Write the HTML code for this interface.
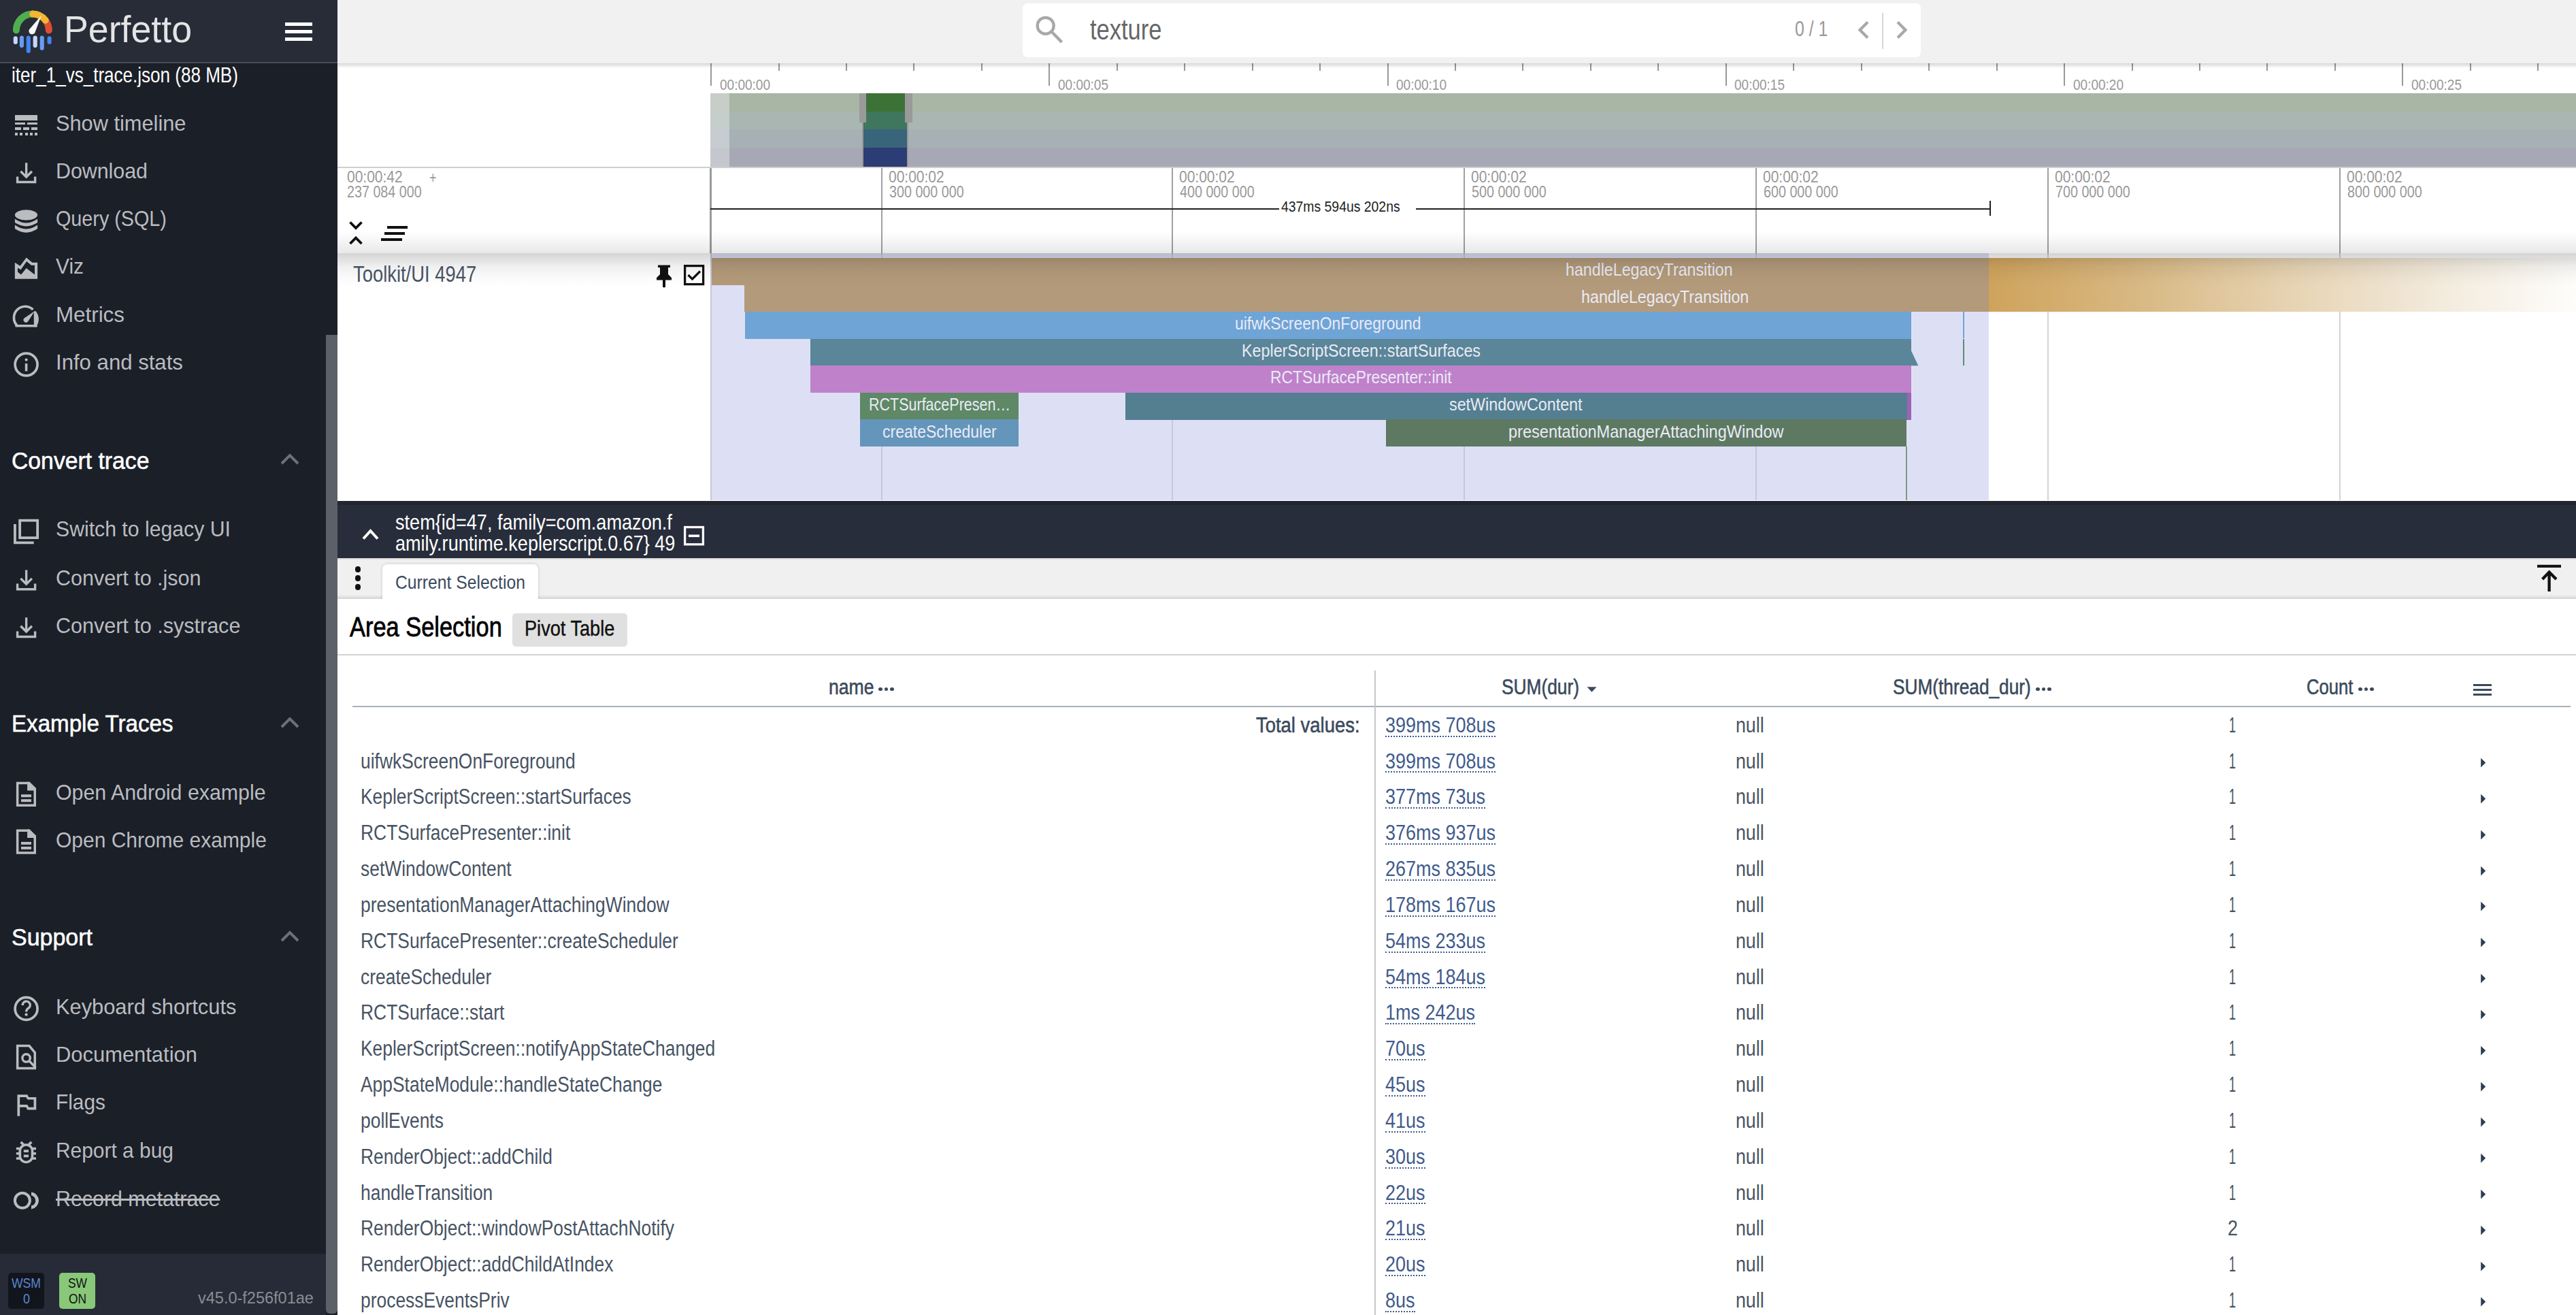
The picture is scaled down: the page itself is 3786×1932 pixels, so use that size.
<!DOCTYPE html><html><head><meta charset="utf-8"><style>
html,body{margin:0;padding:0;width:3786px;height:1932px;overflow:hidden;background:#fff;}
body{position:relative;font-family:"Liberation Sans",sans-serif;}
.t{position:absolute;white-space:pre;line-height:1;transform-origin:0 0;display:block;}
.r{position:absolute;}
</style></head><body>
<div class="r" style="left:496.0px;top:93.0px;width:3290.0px;height:152.0px;background:#ffffff;"></div>
<div class="r" style="left:1044.0px;top:137.0px;width:2742.0px;height:26.5px;background:#a9b5a5;"></div>
<div class="r" style="left:1044.0px;top:137.0px;width:28.0px;height:26.5px;background:#c7cec7;"></div>
<div class="r" style="left:1268.5px;top:137.0px;width:64.5px;height:26.5px;background:#3d7236;"></div>
<div class="r" style="left:1044.0px;top:163.5px;width:2742.0px;height:26.5px;background:#a9b6b2;"></div>
<div class="r" style="left:1044.0px;top:163.5px;width:28.0px;height:26.5px;background:#c6cecc;"></div>
<div class="r" style="left:1268.5px;top:163.5px;width:64.5px;height:26.5px;background:#3f765e;"></div>
<div class="r" style="left:1044.0px;top:190.0px;width:2742.0px;height:26.5px;background:#a7b1b5;"></div>
<div class="r" style="left:1044.0px;top:190.0px;width:28.0px;height:26.5px;background:#c6ccd0;"></div>
<div class="r" style="left:1268.5px;top:190.0px;width:64.5px;height:26.5px;background:#39647a;"></div>
<div class="r" style="left:1044.0px;top:216.5px;width:2742.0px;height:28.5px;background:#a6a8b6;"></div>
<div class="r" style="left:1044.0px;top:216.5px;width:28.0px;height:28.5px;background:#c5c7ce;"></div>
<div class="r" style="left:1268.5px;top:216.5px;width:64.5px;height:28.5px;background:#2c3c75;"></div>
<div class="r" style="left:1262.5px;top:137.0px;width:10.3px;height:43.0px;background:#9a9a9a;"></div>
<div class="r" style="left:1330.0px;top:137.0px;width:11.3px;height:43.0px;background:#9a9a9a;"></div>
<div class="r" style="left:1266.5px;top:180.0px;width:2.0px;height:65.0px;background:#9a9a9a;"></div>
<div class="r" style="left:1333.0px;top:180.0px;width:2.0px;height:65.0px;background:#9a9a9a;"></div>
<div class="r" style="left:496.0px;top:245.0px;width:3290.0px;height:2.0px;background:#cfcfcf;"></div>
<div class="r" style="left:1044.0px;top:93.0px;width:2.0px;height:33.0px;background:#999999;"></div>
<span class="t" style="left:1057.5px;top:113.5px;font-size:22.43px;color:#999999;transform:scaleX(0.8476);">00:00:00</span>
<div class="r" style="left:1143.5px;top:93.0px;width:2.0px;height:11.0px;background:#999999;"></div>
<div class="r" style="left:1242.9px;top:93.0px;width:2.0px;height:11.0px;background:#999999;"></div>
<div class="r" style="left:1342.3px;top:93.0px;width:2.0px;height:11.0px;background:#999999;"></div>
<div class="r" style="left:1441.8px;top:93.0px;width:2.0px;height:11.0px;background:#999999;"></div>
<div class="r" style="left:1541.2px;top:93.0px;width:2.0px;height:33.0px;background:#999999;"></div>
<span class="t" style="left:1554.8px;top:113.5px;font-size:22.43px;color:#999999;transform:scaleX(0.8476);">00:00:05</span>
<div class="r" style="left:1640.7px;top:93.0px;width:2.0px;height:11.0px;background:#999999;"></div>
<div class="r" style="left:1740.2px;top:93.0px;width:2.0px;height:11.0px;background:#999999;"></div>
<div class="r" style="left:1839.6px;top:93.0px;width:2.0px;height:11.0px;background:#999999;"></div>
<div class="r" style="left:1939.1px;top:93.0px;width:2.0px;height:11.0px;background:#999999;"></div>
<div class="r" style="left:2038.5px;top:93.0px;width:2.0px;height:33.0px;background:#999999;"></div>
<span class="t" style="left:2052.0px;top:113.5px;font-size:22.43px;color:#999999;transform:scaleX(0.8476);">00:00:10</span>
<div class="r" style="left:2137.9px;top:93.0px;width:2.0px;height:11.0px;background:#999999;"></div>
<div class="r" style="left:2237.4px;top:93.0px;width:2.0px;height:11.0px;background:#999999;"></div>
<div class="r" style="left:2336.9px;top:93.0px;width:2.0px;height:11.0px;background:#999999;"></div>
<div class="r" style="left:2436.3px;top:93.0px;width:2.0px;height:11.0px;background:#999999;"></div>
<div class="r" style="left:2535.8px;top:93.0px;width:2.0px;height:33.0px;background:#999999;"></div>
<span class="t" style="left:2549.2px;top:113.5px;font-size:22.43px;color:#999999;transform:scaleX(0.8476);">00:00:15</span>
<div class="r" style="left:2635.2px;top:93.0px;width:2.0px;height:11.0px;background:#999999;"></div>
<div class="r" style="left:2734.7px;top:93.0px;width:2.0px;height:11.0px;background:#999999;"></div>
<div class="r" style="left:2834.1px;top:93.0px;width:2.0px;height:11.0px;background:#999999;"></div>
<div class="r" style="left:2933.6px;top:93.0px;width:2.0px;height:11.0px;background:#999999;"></div>
<div class="r" style="left:3033.0px;top:93.0px;width:2.0px;height:33.0px;background:#999999;"></div>
<span class="t" style="left:3046.5px;top:113.5px;font-size:22.43px;color:#999999;transform:scaleX(0.8476);">00:00:20</span>
<div class="r" style="left:3132.5px;top:93.0px;width:2.0px;height:11.0px;background:#999999;"></div>
<div class="r" style="left:3231.9px;top:93.0px;width:2.0px;height:11.0px;background:#999999;"></div>
<div class="r" style="left:3331.3px;top:93.0px;width:2.0px;height:11.0px;background:#999999;"></div>
<div class="r" style="left:3430.8px;top:93.0px;width:2.0px;height:11.0px;background:#999999;"></div>
<div class="r" style="left:3530.2px;top:93.0px;width:2.0px;height:33.0px;background:#999999;"></div>
<span class="t" style="left:3543.8px;top:113.5px;font-size:22.43px;color:#999999;transform:scaleX(0.8476);">00:00:25</span>
<div class="r" style="left:3629.7px;top:93.0px;width:2.0px;height:11.0px;background:#999999;"></div>
<div class="r" style="left:3729.2px;top:93.0px;width:2.0px;height:11.0px;background:#999999;"></div>
<div class="r" style="left:496.0px;top:93.0px;width:3290.0px;height:7.0px;background:transparent;background:linear-gradient(rgba(0,0,0,0.16),rgba(0,0,0,0));"></div>
<div class="r" style="left:496.0px;top:247.0px;width:3290.0px;height:125.0px;background:#ffffff;"></div>
<span class="t" style="left:510.0px;top:247.6px;font-size:24.43px;color:#999999;transform:scaleX(0.8592);">00:00:42</span>
<span class="t" style="left:510.0px;top:269.8px;font-size:24.43px;color:#999999;transform:scaleX(0.8075);">237 084 000</span>
<span class="t" style="left:631.0px;top:249.0px;font-size:24.29px;color:#999999;transform:scaleX(0.7404);">+</span>
<svg class="r" style="left:505px;top:318px;" width="40" height="48" viewBox="0 0 40 48"><path d="M9.5 8.5 L18 17 L26.5 8.5 M9.5 40 L18 31.5 L26.5 40" stroke="#111" stroke-width="3.8" fill="none"/></svg>
<div class="r" style="left:569.0px;top:332.0px;width:30.4px;height:4.0px;background:#111;"></div>
<div class="r" style="left:564.5px;top:340.5px;width:30.5px;height:4.0px;background:#111;"></div>
<div class="r" style="left:560.0px;top:349.5px;width:31.0px;height:4.0px;background:#111;"></div>
<div class="r" style="left:1294.8px;top:247.0px;width:2.2px;height:125.0px;background:#a0a0a0;"></div>
<span class="t" style="left:1305.9px;top:247.6px;font-size:24.43px;color:#999999;transform:scaleX(0.8592);">00:00:02</span>
<span class="t" style="left:1306.9px;top:269.8px;font-size:24.43px;color:#999999;transform:scaleX(0.8075);">300 000 000</span>
<div class="r" style="left:1721.7px;top:247.0px;width:2.2px;height:125.0px;background:#a0a0a0;"></div>
<span class="t" style="left:1732.8px;top:247.6px;font-size:24.43px;color:#999999;transform:scaleX(0.8592);">00:00:02</span>
<span class="t" style="left:1733.8px;top:269.8px;font-size:24.43px;color:#999999;transform:scaleX(0.8075);">400 000 000</span>
<div class="r" style="left:2150.9px;top:247.0px;width:2.2px;height:125.0px;background:#a0a0a0;"></div>
<span class="t" style="left:2162.0px;top:247.6px;font-size:24.43px;color:#999999;transform:scaleX(0.8592);">00:00:02</span>
<span class="t" style="left:2163.0px;top:269.8px;font-size:24.43px;color:#999999;transform:scaleX(0.8075);">500 000 000</span>
<div class="r" style="left:2580.0px;top:247.0px;width:2.2px;height:125.0px;background:#a0a0a0;"></div>
<span class="t" style="left:2591.1px;top:247.6px;font-size:24.43px;color:#999999;transform:scaleX(0.8592);">00:00:02</span>
<span class="t" style="left:2592.1px;top:269.8px;font-size:24.43px;color:#999999;transform:scaleX(0.8075);">600 000 000</span>
<div class="r" style="left:3009.2px;top:247.0px;width:2.2px;height:125.0px;background:#a0a0a0;"></div>
<span class="t" style="left:3020.3px;top:247.6px;font-size:24.43px;color:#999999;transform:scaleX(0.8592);">00:00:02</span>
<span class="t" style="left:3021.3px;top:269.8px;font-size:24.43px;color:#999999;transform:scaleX(0.8075);">700 000 000</span>
<div class="r" style="left:3438.2px;top:247.0px;width:2.2px;height:125.0px;background:#a0a0a0;"></div>
<span class="t" style="left:3449.3px;top:247.6px;font-size:24.43px;color:#999999;transform:scaleX(0.8592);">00:00:02</span>
<span class="t" style="left:3450.3px;top:269.8px;font-size:24.43px;color:#999999;transform:scaleX(0.8075);">800 000 000</span>
<div class="r" style="left:1042.5px;top:247.0px;width:3.0px;height:125.0px;background:#9a9a9a;"></div>
<div class="r" style="left:1044.0px;top:306.2px;width:835.6px;height:2.2px;background:#222222;"></div>
<div class="r" style="left:2080.5px;top:306.2px;width:843.5px;height:2.2px;background:#222222;"></div>
<div class="r" style="left:2923.6px;top:294.5px;width:2.0px;height:22.5px;background:#222222;"></div>
<span class="t" style="left:1883.0px;top:292.7px;font-size:22.43px;color:#222222;transform:scaleX(0.8648);">437ms 594us 202ns</span>
<div class="r" style="left:496.0px;top:340.0px;width:3290.0px;height:32.0px;background:transparent;background:linear-gradient(rgba(0,0,0,0),rgba(0,0,0,0.09));"></div>
<div class="r" style="left:496.0px;top:372.0px;width:548.0px;height:363.0px;background:#ffffff;"></div>
<div class="r" style="left:1044.0px;top:372.0px;width:1879.0px;height:363.0px;background:#dde0f5;"></div>
<div class="r" style="left:2923.0px;top:372.0px;width:863.0px;height:363.0px;background:#ffffff;"></div>
<div class="r" style="left:1294.9px;top:372.0px;width:2.0px;height:363.0px;background:#c4c8dc;"></div>
<div class="r" style="left:1721.8px;top:372.0px;width:2.0px;height:363.0px;background:#c4c8dc;"></div>
<div class="r" style="left:2151.0px;top:372.0px;width:2.0px;height:363.0px;background:#c4c8dc;"></div>
<div class="r" style="left:2580.1px;top:372.0px;width:2.0px;height:363.0px;background:#c4c8dc;"></div>
<div class="r" style="left:3009.3px;top:372.0px;width:2.0px;height:363.0px;background:#d4d4d4;"></div>
<div class="r" style="left:3438.3px;top:372.0px;width:2.0px;height:363.0px;background:#d4d4d4;"></div>
<div class="r" style="left:1043.5px;top:372.0px;width:2.5px;height:363.0px;background:#c3c8da;"></div>
<div class="r" style="left:2923.0px;top:378.7px;width:863.0px;height:79.2px;background:transparent;background:linear-gradient(90deg,#cfa35c 0%,#d8b882 25%,#e6d2b0 50%,#f2e9da 75%,#fefdfb 100%);"></div>
<div class="r" style="left:1046.0px;top:378.7px;width:1877.0px;height:40.2px;background:#b39a7a;"></div>
<div class="r" style="left:1093.8px;top:418.3px;width:1829.2px;height:40.2px;background:#b39a7a;"></div>
<div class="r" style="left:1094.5px;top:457.9px;width:1714.3px;height:40.2px;background:#6fa4d6;"></div>
<div class="r" style="left:1191.0px;top:497.5px;width:1618.0px;height:40.2px;background:#5b8598;"></div>
<div class="r" style="left:1191.0px;top:537.1px;width:1618.0px;height:40.2px;background:#c081cb;"></div>
<div class="r" style="left:1264.2px;top:576.7px;width:232.9px;height:40.2px;background:#5f8866;"></div>
<div class="r" style="left:1264.2px;top:616.3px;width:232.9px;height:40.2px;background:#6495bb;"></div>
<div class="r" style="left:1653.5px;top:576.7px;width:1149.5px;height:40.2px;background:#547f91;"></div>
<div class="r" style="left:2803.0px;top:576.7px;width:6.0px;height:40.2px;background:#9d63b5;"></div>
<div class="r" style="left:2036.7px;top:616.3px;width:765.1px;height:40.2px;background:#5e7962;"></div>
<svg class="r" style="left:2800px;top:495px" width="30" height="45"><path d="M8.8 20 L19.3 42.2 L8.8 42.2 Z" fill="#5b8598"/></svg>
<div class="r" style="left:2885.0px;top:457.9px;width:2.0px;height:39.6px;background:#6fa4d6;"></div>
<div class="r" style="left:2885.0px;top:497.5px;width:2.0px;height:39.6px;background:#5f8a78;"></div>
<div class="r" style="left:2801.0px;top:655.9px;width:1.5px;height:79.1px;background:#7d9a80;"></div>
<span class="t" style="left:2301.0px;top:384.0px;font-size:25.71px;color:#e9ebf6;transform:scaleX(0.9034);">handleLegacyTransition</span>
<span class="t" style="left:2324.3px;top:423.6px;font-size:25.71px;color:#e9ebf6;transform:scaleX(0.9056);">handleLegacyTransition</span>
<span class="t" style="left:1814.8px;top:463.2px;font-size:25.71px;color:#e9ebf6;transform:scaleX(0.8906);">uifwkScreenOnForeground</span>
<span class="t" style="left:1824.7px;top:502.8px;font-size:25.71px;color:#e9ebf6;transform:scaleX(0.9067);">KeplerScriptScreen::startSurfaces</span>
<span class="t" style="left:1867.2px;top:542.4px;font-size:25.71px;color:#e9ebf6;transform:scaleX(0.8887);">RCTSurfacePresenter::init</span>
<span class="t" style="left:2130.4px;top:582.0px;font-size:25.71px;color:#e9ebf6;transform:scaleX(0.9063);">setWindowContent</span>
<span class="t" style="left:2216.6px;top:621.6px;font-size:25.71px;color:#e9ebf6;transform:scaleX(0.9162);">presentationManagerAttachingWindow</span>
<span class="t" style="left:1276.5px;top:582.0px;font-size:25.71px;color:#e9ebf6;transform:scaleX(0.8365);">RCTSurfacePresen…</span>
<span class="t" style="left:1297.0px;top:621.6px;font-size:25.71px;color:#e9ebf6;transform:scaleX(0.8955);">createScheduler</span>
<div class="r" style="left:496.0px;top:372.0px;width:3290.0px;height:50.0px;background:transparent;background:linear-gradient(rgba(0,0,0,0.17),rgba(0,0,0,0.06) 40%,rgba(0,0,0,0.015) 75%,rgba(0,0,0,0));"></div>
<span class="t" style="left:518.6px;top:385.8px;font-size:33.43px;color:#475363;transform:scaleX(0.8194);">Toolkit/UI 4947</span>
<svg class="r" style="left:960px;top:386px;" width="32" height="40" viewBox="0 0 32 40"><path d="M7 3.5 H25 V7 H22 V17 L27 22 V25.5 H18 V35.5 Q16 37.5 14 35.5 V25.5 H5 V22 L10 17 V7 H7 Z" fill="#111"/></svg>
<svg class="r" style="left:1000px;top:384px;" width="42" height="40" viewBox="0 0 42 40"><rect x="6.6" y="6.6" width="27" height="27" stroke="#111" stroke-width="3.3" fill="none"/><path d="M11.5 20 L17.5 26 L29 14.5" stroke="#111" stroke-width="3.3" fill="none"/></svg>
<div class="r" style="left:496.0px;top:735.5px;width:3290.0px;height:84.0px;background:#272d3a;"></div>
<div class="r" style="left:496.0px;top:735.5px;width:3290.0px;height:6.5px;background:#21262f;"></div>
<svg class="r" style="left:526px;top:770px;" width="40" height="30" viewBox="0 0 40 30"><path d="M8 21.5 L18.5 10 L29 21.5" stroke="#ffffff" stroke-width="4" fill="none"/></svg>
<span class="t" style="left:580.9px;top:751.9px;font-size:31.43px;color:#ffffff;transform:scaleX(0.8629);">stem{id=47, family=com.amazon.f</span>
<span class="t" style="left:580.9px;top:782.9px;font-size:31.43px;color:#ffffff;transform:scaleX(0.8608);">amily.runtime.keplerscript.0.67} 49</span>
<svg class="r" style="left:1000px;top:768px;" width="40" height="40" viewBox="0 0 40 40"><rect x="6.6" y="6.5" width="26.8" height="25.3" stroke="#ffffff" stroke-width="3.3" fill="none"/><rect x="12" y="17.5" width="16" height="3.6" fill="#ffffff"/></svg>
<div class="r" style="left:496.0px;top:819.5px;width:3290.0px;height:60.5px;background:#f0f0f0;"></div>
<div class="r" style="left:496.0px;top:819.5px;width:3290.0px;height:3.5px;background:transparent;background:linear-gradient(rgba(0,0,0,0.12),rgba(0,0,0,0));"></div>
<div class="r" style="left:496.0px;top:874.0px;width:3290.0px;height:6.0px;background:transparent;background:linear-gradient(rgba(0,0,0,0),rgba(0,0,0,0.12));"></div>
<div class="r" style="left:521.7px;top:832.0px;width:8.6px;height:8.6px;background:#111;border-radius:50%;"></div>
<div class="r" style="left:521.7px;top:845.3px;width:8.6px;height:8.6px;background:#111;border-radius:50%;"></div>
<div class="r" style="left:521.7px;top:858.1px;width:8.6px;height:8.6px;background:#111;border-radius:50%;"></div>
<div class="r" style="left:562.0px;top:829.0px;width:229.4px;height:51.0px;background:#ffffff;border-radius:7px 7px 0 0;box-shadow:0 0 4px rgba(0,0,0,0.18);"></div>
<div class="r" style="left:562.0px;top:874.0px;width:229.4px;height:6.0px;background:#ffffff;"></div>
<span class="t" style="left:581.0px;top:840.6px;font-size:28.29px;color:#3b4a5c;transform:scaleX(0.8740);">Current Selection</span>
<svg class="r" style="left:3724px;top:825px;" width="46" height="50" viewBox="0 0 46 50"><rect x="5" y="4.8" width="35" height="4.1" fill="#111"/><path d="M22.6 44 V16 M12.6 26 L22.6 15.6 L33 26" stroke="#111" stroke-width="4.3" fill="none"/></svg>
<div class="r" style="left:496.0px;top:880.0px;width:3290.0px;height:1052.0px;background:#ffffff;"></div>
<span class="t" style="left:513.9px;top:899.9px;font-size:41.43px;color:#000000;transform:scaleX(0.8306);-webkit-text-stroke:0.8px #000;">Area Selection</span>
<div class="r" style="left:753.2px;top:901.0px;width:168.8px;height:48.5px;background:#e0e0e0;border-radius:5px;"></div>
<span class="t" style="left:771.2px;top:908.4px;font-size:31.43px;color:#111111;transform:scaleX(0.8644);-webkit-text-stroke:0.45px #111;">Pivot Table</span>
<div class="r" style="left:496.0px;top:961.3px;width:3290.0px;height:1.7px;background:#d2d2d2;"></div>
<div class="r" style="left:518.0px;top:1036.8px;width:3260.0px;height:2.0px;background:#a9b1bb;"></div>
<div class="r" style="left:2020.0px;top:985.0px;width:2.0px;height:947.0px;background:#c4c7cc;"></div>
<span class="t" style="left:1218.2px;top:994.3px;font-size:31.43px;color:#3b4a5c;transform:scaleX(0.8471);-webkit-text-stroke:0.6px #3b4a5c;">name</span>
<div class="r" style="left:1291.0px;top:1009.7px;width:5.6px;height:5.6px;background:#3b4a5c;border-radius:50%;"></div>
<div class="r" style="left:1299.6px;top:1009.7px;width:5.6px;height:5.6px;background:#3b4a5c;border-radius:50%;"></div>
<div class="r" style="left:1308.2px;top:1009.7px;width:5.6px;height:5.6px;background:#3b4a5c;border-radius:50%;"></div>
<span class="t" style="left:2207.0px;top:994.3px;font-size:31.43px;color:#3b4a5c;transform:scaleX(0.8370);-webkit-text-stroke:0.6px #3b4a5c;">SUM(dur)</span>
<svg class="r" style="left:2322px;top:1006px;" width="30" height="20" viewBox="0 0 30 20"><path d="M10.5 3.3 H24.5 L17.5 10.7 Z" fill="#3b4a5c"/></svg>
<span class="t" style="left:2781.7px;top:994.3px;font-size:31.43px;color:#3b4a5c;transform:scaleX(0.8353);-webkit-text-stroke:0.6px #3b4a5c;">SUM(thread_dur)</span>
<div class="r" style="left:2992.0px;top:1009.7px;width:5.6px;height:5.6px;background:#3b4a5c;border-radius:50%;"></div>
<div class="r" style="left:3000.6px;top:1009.7px;width:5.6px;height:5.6px;background:#3b4a5c;border-radius:50%;"></div>
<div class="r" style="left:3009.2px;top:1009.7px;width:5.6px;height:5.6px;background:#3b4a5c;border-radius:50%;"></div>
<span class="t" style="left:3390.0px;top:994.3px;font-size:31.43px;color:#3b4a5c;transform:scaleX(0.8168);-webkit-text-stroke:0.6px #3b4a5c;">Count</span>
<div class="r" style="left:3466.0px;top:1009.7px;width:5.6px;height:5.6px;background:#3b4a5c;border-radius:50%;"></div>
<div class="r" style="left:3474.6px;top:1009.7px;width:5.6px;height:5.6px;background:#3b4a5c;border-radius:50%;"></div>
<div class="r" style="left:3483.2px;top:1009.7px;width:5.6px;height:5.6px;background:#3b4a5c;border-radius:50%;"></div>
<div class="r" style="left:3635.0px;top:1004.5px;width:27.0px;height:3.0px;background:#3b4a5c;"></div>
<div class="r" style="left:3635.0px;top:1011.5px;width:27.0px;height:3.0px;background:#3b4a5c;"></div>
<div class="r" style="left:3635.0px;top:1018.5px;width:27.0px;height:3.0px;background:#3b4a5c;"></div>
<span class="t" style="left:1846.0px;top:1049.7px;font-size:31.00px;color:#3b4a5c;transform:scaleX(0.8850);-webkit-text-stroke:0.6px #3b4a5c;">Total values:</span>
<span class="t" style="left:2036.0px;top:1049.7px;font-size:31.00px;color:#3f5b8c;transform:scaleX(0.8700);">399ms 708us</span>
<div class="r" style="left:2036.0px;top:1080.5px;width:161.9px;height:0;border-top:2px dotted #3f5b8c;"></div>
<span class="t" style="left:2551.0px;top:1049.7px;font-size:31.00px;color:#475363;transform:scaleX(0.8620);">null</span>
<span class="t" style="left:3276.0px;top:1049.7px;font-size:31.00px;color:#475363;transform:scaleX(0.5800);">1</span>
<span class="t" style="left:529.8px;top:1102.5px;font-size:31.00px;color:#475363;transform:scaleX(0.8520);">uifwkScreenOnForeground</span>
<span class="t" style="left:2036.0px;top:1102.5px;font-size:31.00px;color:#3f5b8c;transform:scaleX(0.8700);">399ms 708us</span>
<div class="r" style="left:2036.0px;top:1133.3px;width:161.9px;height:0;border-top:2px dotted #3f5b8c;"></div>
<span class="t" style="left:2551.0px;top:1102.5px;font-size:31.00px;color:#475363;transform:scaleX(0.8620);">null</span>
<span class="t" style="left:3276.0px;top:1102.5px;font-size:31.00px;color:#475363;transform:scaleX(0.5800);">1</span>
<svg class="r" style="left:3640px;top:1112.03px;" width="20" height="20" viewBox="0 0 20 20"><path d="M6.2 1.7 L13.2 8.6 L6.2 15.5 Z" fill="#2f3e52"/></svg>
<span class="t" style="left:529.8px;top:1155.4px;font-size:31.00px;color:#475363;transform:scaleX(0.8520);">KeplerScriptScreen::startSurfaces</span>
<span class="t" style="left:2036.0px;top:1155.4px;font-size:31.00px;color:#3f5b8c;transform:scaleX(0.8700);">377ms 73us</span>
<div class="r" style="left:2036.0px;top:1186.2px;width:146.9px;height:0;border-top:2px dotted #3f5b8c;"></div>
<span class="t" style="left:2551.0px;top:1155.4px;font-size:31.00px;color:#475363;transform:scaleX(0.8620);">null</span>
<span class="t" style="left:3276.0px;top:1155.4px;font-size:31.00px;color:#475363;transform:scaleX(0.5800);">1</span>
<svg class="r" style="left:3640px;top:1164.8600000000001px;" width="20" height="20" viewBox="0 0 20 20"><path d="M6.2 1.7 L13.2 8.6 L6.2 15.5 Z" fill="#2f3e52"/></svg>
<span class="t" style="left:529.8px;top:1208.2px;font-size:31.00px;color:#475363;transform:scaleX(0.8520);">RCTSurfacePresenter::init</span>
<span class="t" style="left:2036.0px;top:1208.2px;font-size:31.00px;color:#3f5b8c;transform:scaleX(0.8700);">376ms 937us</span>
<div class="r" style="left:2036.0px;top:1239.0px;width:161.9px;height:0;border-top:2px dotted #3f5b8c;"></div>
<span class="t" style="left:2551.0px;top:1208.2px;font-size:31.00px;color:#475363;transform:scaleX(0.8620);">null</span>
<span class="t" style="left:3276.0px;top:1208.2px;font-size:31.00px;color:#475363;transform:scaleX(0.5800);">1</span>
<svg class="r" style="left:3640px;top:1217.69px;" width="20" height="20" viewBox="0 0 20 20"><path d="M6.2 1.7 L13.2 8.6 L6.2 15.5 Z" fill="#2f3e52"/></svg>
<span class="t" style="left:529.8px;top:1261.0px;font-size:31.00px;color:#475363;transform:scaleX(0.8520);">setWindowContent</span>
<span class="t" style="left:2036.0px;top:1261.0px;font-size:31.00px;color:#3f5b8c;transform:scaleX(0.8700);">267ms 835us</span>
<div class="r" style="left:2036.0px;top:1291.8px;width:161.9px;height:0;border-top:2px dotted #3f5b8c;"></div>
<span class="t" style="left:2551.0px;top:1261.0px;font-size:31.00px;color:#475363;transform:scaleX(0.8620);">null</span>
<span class="t" style="left:3276.0px;top:1261.0px;font-size:31.00px;color:#475363;transform:scaleX(0.5800);">1</span>
<svg class="r" style="left:3640px;top:1270.52px;" width="20" height="20" viewBox="0 0 20 20"><path d="M6.2 1.7 L13.2 8.6 L6.2 15.5 Z" fill="#2f3e52"/></svg>
<span class="t" style="left:529.8px;top:1313.8px;font-size:31.00px;color:#475363;transform:scaleX(0.8520);">presentationManagerAttachingWindow</span>
<span class="t" style="left:2036.0px;top:1313.8px;font-size:31.00px;color:#3f5b8c;transform:scaleX(0.8700);">178ms 167us</span>
<div class="r" style="left:2036.0px;top:1344.6px;width:161.9px;height:0;border-top:2px dotted #3f5b8c;"></div>
<span class="t" style="left:2551.0px;top:1313.8px;font-size:31.00px;color:#475363;transform:scaleX(0.8620);">null</span>
<span class="t" style="left:3276.0px;top:1313.8px;font-size:31.00px;color:#475363;transform:scaleX(0.5800);">1</span>
<svg class="r" style="left:3640px;top:1323.35px;" width="20" height="20" viewBox="0 0 20 20"><path d="M6.2 1.7 L13.2 8.6 L6.2 15.5 Z" fill="#2f3e52"/></svg>
<span class="t" style="left:529.8px;top:1366.7px;font-size:31.00px;color:#475363;transform:scaleX(0.8520);">RCTSurfacePresenter::createScheduler</span>
<span class="t" style="left:2036.0px;top:1366.7px;font-size:31.00px;color:#3f5b8c;transform:scaleX(0.8700);">54ms 233us</span>
<div class="r" style="left:2036.0px;top:1397.5px;width:146.9px;height:0;border-top:2px dotted #3f5b8c;"></div>
<span class="t" style="left:2551.0px;top:1366.7px;font-size:31.00px;color:#475363;transform:scaleX(0.8620);">null</span>
<span class="t" style="left:3276.0px;top:1366.7px;font-size:31.00px;color:#475363;transform:scaleX(0.5800);">1</span>
<svg class="r" style="left:3640px;top:1376.18px;" width="20" height="20" viewBox="0 0 20 20"><path d="M6.2 1.7 L13.2 8.6 L6.2 15.5 Z" fill="#2f3e52"/></svg>
<span class="t" style="left:529.8px;top:1419.5px;font-size:31.00px;color:#475363;transform:scaleX(0.8520);">createScheduler</span>
<span class="t" style="left:2036.0px;top:1419.5px;font-size:31.00px;color:#3f5b8c;transform:scaleX(0.8700);">54ms 184us</span>
<div class="r" style="left:2036.0px;top:1450.3px;width:146.9px;height:0;border-top:2px dotted #3f5b8c;"></div>
<span class="t" style="left:2551.0px;top:1419.5px;font-size:31.00px;color:#475363;transform:scaleX(0.8620);">null</span>
<span class="t" style="left:3276.0px;top:1419.5px;font-size:31.00px;color:#475363;transform:scaleX(0.5800);">1</span>
<svg class="r" style="left:3640px;top:1429.01px;" width="20" height="20" viewBox="0 0 20 20"><path d="M6.2 1.7 L13.2 8.6 L6.2 15.5 Z" fill="#2f3e52"/></svg>
<span class="t" style="left:529.8px;top:1472.3px;font-size:31.00px;color:#475363;transform:scaleX(0.8520);">RCTSurface::start</span>
<span class="t" style="left:2036.0px;top:1472.3px;font-size:31.00px;color:#3f5b8c;transform:scaleX(0.8700);">1ms 242us</span>
<div class="r" style="left:2036.0px;top:1503.1px;width:131.9px;height:0;border-top:2px dotted #3f5b8c;"></div>
<span class="t" style="left:2551.0px;top:1472.3px;font-size:31.00px;color:#475363;transform:scaleX(0.8620);">null</span>
<span class="t" style="left:3276.0px;top:1472.3px;font-size:31.00px;color:#475363;transform:scaleX(0.5800);">1</span>
<svg class="r" style="left:3640px;top:1481.8400000000001px;" width="20" height="20" viewBox="0 0 20 20"><path d="M6.2 1.7 L13.2 8.6 L6.2 15.5 Z" fill="#2f3e52"/></svg>
<span class="t" style="left:529.8px;top:1525.2px;font-size:31.00px;color:#475363;transform:scaleX(0.8520);">KeplerScriptScreen::notifyAppStateChanged</span>
<span class="t" style="left:2036.0px;top:1525.2px;font-size:31.00px;color:#3f5b8c;transform:scaleX(0.8700);">70us</span>
<div class="r" style="left:2036.0px;top:1556.0px;width:58.5px;height:0;border-top:2px dotted #3f5b8c;"></div>
<span class="t" style="left:2551.0px;top:1525.2px;font-size:31.00px;color:#475363;transform:scaleX(0.8620);">null</span>
<span class="t" style="left:3276.0px;top:1525.2px;font-size:31.00px;color:#475363;transform:scaleX(0.5800);">1</span>
<svg class="r" style="left:3640px;top:1534.67px;" width="20" height="20" viewBox="0 0 20 20"><path d="M6.2 1.7 L13.2 8.6 L6.2 15.5 Z" fill="#2f3e52"/></svg>
<span class="t" style="left:529.8px;top:1578.0px;font-size:31.00px;color:#475363;transform:scaleX(0.8520);">AppStateModule::handleStateChange</span>
<span class="t" style="left:2036.0px;top:1578.0px;font-size:31.00px;color:#3f5b8c;transform:scaleX(0.8700);">45us</span>
<div class="r" style="left:2036.0px;top:1608.8px;width:58.5px;height:0;border-top:2px dotted #3f5b8c;"></div>
<span class="t" style="left:2551.0px;top:1578.0px;font-size:31.00px;color:#475363;transform:scaleX(0.8620);">null</span>
<span class="t" style="left:3276.0px;top:1578.0px;font-size:31.00px;color:#475363;transform:scaleX(0.5800);">1</span>
<svg class="r" style="left:3640px;top:1587.5px;" width="20" height="20" viewBox="0 0 20 20"><path d="M6.2 1.7 L13.2 8.6 L6.2 15.5 Z" fill="#2f3e52"/></svg>
<span class="t" style="left:529.8px;top:1630.8px;font-size:31.00px;color:#475363;transform:scaleX(0.8520);">pollEvents</span>
<span class="t" style="left:2036.0px;top:1630.8px;font-size:31.00px;color:#3f5b8c;transform:scaleX(0.8700);">41us</span>
<div class="r" style="left:2036.0px;top:1661.6px;width:58.5px;height:0;border-top:2px dotted #3f5b8c;"></div>
<span class="t" style="left:2551.0px;top:1630.8px;font-size:31.00px;color:#475363;transform:scaleX(0.8620);">null</span>
<span class="t" style="left:3276.0px;top:1630.8px;font-size:31.00px;color:#475363;transform:scaleX(0.5800);">1</span>
<svg class="r" style="left:3640px;top:1640.33px;" width="20" height="20" viewBox="0 0 20 20"><path d="M6.2 1.7 L13.2 8.6 L6.2 15.5 Z" fill="#2f3e52"/></svg>
<span class="t" style="left:529.8px;top:1683.7px;font-size:31.00px;color:#475363;transform:scaleX(0.8520);">RenderObject::addChild</span>
<span class="t" style="left:2036.0px;top:1683.7px;font-size:31.00px;color:#3f5b8c;transform:scaleX(0.8700);">30us</span>
<div class="r" style="left:2036.0px;top:1714.5px;width:58.5px;height:0;border-top:2px dotted #3f5b8c;"></div>
<span class="t" style="left:2551.0px;top:1683.7px;font-size:31.00px;color:#475363;transform:scaleX(0.8620);">null</span>
<span class="t" style="left:3276.0px;top:1683.7px;font-size:31.00px;color:#475363;transform:scaleX(0.5800);">1</span>
<svg class="r" style="left:3640px;top:1693.16px;" width="20" height="20" viewBox="0 0 20 20"><path d="M6.2 1.7 L13.2 8.6 L6.2 15.5 Z" fill="#2f3e52"/></svg>
<span class="t" style="left:529.8px;top:1736.5px;font-size:31.00px;color:#475363;transform:scaleX(0.8520);">handleTransition</span>
<span class="t" style="left:2036.0px;top:1736.5px;font-size:31.00px;color:#3f5b8c;transform:scaleX(0.8700);">22us</span>
<div class="r" style="left:2036.0px;top:1767.3px;width:58.5px;height:0;border-top:2px dotted #3f5b8c;"></div>
<span class="t" style="left:2551.0px;top:1736.5px;font-size:31.00px;color:#475363;transform:scaleX(0.8620);">null</span>
<span class="t" style="left:3276.0px;top:1736.5px;font-size:31.00px;color:#475363;transform:scaleX(0.5800);">1</span>
<svg class="r" style="left:3640px;top:1745.99px;" width="20" height="20" viewBox="0 0 20 20"><path d="M6.2 1.7 L13.2 8.6 L6.2 15.5 Z" fill="#2f3e52"/></svg>
<span class="t" style="left:529.8px;top:1789.3px;font-size:31.00px;color:#475363;transform:scaleX(0.8520);">RenderObject::windowPostAttachNotify</span>
<span class="t" style="left:2036.0px;top:1789.3px;font-size:31.00px;color:#3f5b8c;transform:scaleX(0.8700);">21us</span>
<div class="r" style="left:2036.0px;top:1820.1px;width:58.5px;height:0;border-top:2px dotted #3f5b8c;"></div>
<span class="t" style="left:2551.0px;top:1789.3px;font-size:31.00px;color:#475363;transform:scaleX(0.8620);">null</span>
<span class="t" style="left:3273.5px;top:1789.3px;font-size:31.00px;color:#475363;transform:scaleX(0.8700);">2</span>
<svg class="r" style="left:3640px;top:1798.8200000000002px;" width="20" height="20" viewBox="0 0 20 20"><path d="M6.2 1.7 L13.2 8.6 L6.2 15.5 Z" fill="#2f3e52"/></svg>
<span class="t" style="left:529.8px;top:1842.1px;font-size:31.00px;color:#475363;transform:scaleX(0.8520);">RenderObject::addChildAtIndex</span>
<span class="t" style="left:2036.0px;top:1842.1px;font-size:31.00px;color:#3f5b8c;transform:scaleX(0.8700);">20us</span>
<div class="r" style="left:2036.0px;top:1873.0px;width:58.5px;height:0;border-top:2px dotted #3f5b8c;"></div>
<span class="t" style="left:2551.0px;top:1842.1px;font-size:31.00px;color:#475363;transform:scaleX(0.8620);">null</span>
<span class="t" style="left:3276.0px;top:1842.1px;font-size:31.00px;color:#475363;transform:scaleX(0.5800);">1</span>
<svg class="r" style="left:3640px;top:1851.65px;" width="20" height="20" viewBox="0 0 20 20"><path d="M6.2 1.7 L13.2 8.6 L6.2 15.5 Z" fill="#2f3e52"/></svg>
<span class="t" style="left:529.8px;top:1895.0px;font-size:31.00px;color:#475363;transform:scaleX(0.8520);">processEventsPriv</span>
<span class="t" style="left:2036.0px;top:1895.0px;font-size:31.00px;color:#3f5b8c;transform:scaleX(0.8700);">8us</span>
<div class="r" style="left:2036.0px;top:1925.8px;width:43.5px;height:0;border-top:2px dotted #3f5b8c;"></div>
<span class="t" style="left:2551.0px;top:1895.0px;font-size:31.00px;color:#475363;transform:scaleX(0.8620);">null</span>
<span class="t" style="left:3276.0px;top:1895.0px;font-size:31.00px;color:#475363;transform:scaleX(0.5800);">1</span>
<svg class="r" style="left:3640px;top:1904.48px;" width="20" height="20" viewBox="0 0 20 20"><path d="M6.2 1.7 L13.2 8.6 L6.2 15.5 Z" fill="#2f3e52"/></svg>
<div class="r" style="left:496.0px;top:0.0px;width:3290.0px;height:93.0px;background:#f1f1f1;"></div>
<div class="r" style="left:1503.0px;top:5.0px;width:1319.7px;height:78.8px;background:#ffffff;border-radius:7px;"></div>
<svg class="r" style="left:1515px;top:17px;" width="52" height="52" viewBox="0 0 52 52"><circle cx="21.7" cy="20.8" r="12" stroke="#a8a8a8" stroke-width="4.3" fill="none"/><path d="M30 29 L45.5 45" stroke="#a8a8a8" stroke-width="4.5"/></svg>
<span class="t" style="left:1602.0px;top:21.8px;font-size:42.57px;color:#666666;transform:scaleX(0.8091);">texture</span>
<span class="t" style="left:2637.7px;top:26.8px;font-size:31.71px;color:#999999;transform:scaleX(0.7859);">0 / 1</span>
<svg class="r" style="left:2725px;top:25px;" width="30" height="40" viewBox="0 0 30 40"><path d="M20 7.5 L8.5 19 L20 30.5" stroke="#a8a8a8" stroke-width="4.2" fill="none"/></svg>
<div class="r" style="left:2766.0px;top:19.0px;width:2.0px;height:52.7px;background:#d6d6d6;"></div>
<svg class="r" style="left:2779px;top:25px;" width="30" height="40" viewBox="0 0 30 40"><path d="M10 7.5 L21.5 19 L10 30.5" stroke="#a8a8a8" stroke-width="4.2" fill="none"/></svg>
<div class="r" style="left:0.0px;top:0.0px;width:496.0px;height:1932.0px;background:#1b1f28;"></div>
<div class="r" style="left:0.0px;top:0.0px;width:496.0px;height:91.0px;background:#272c37;"></div>
<div class="r" style="left:0.0px;top:91.0px;width:496.0px;height:2.0px;background:#484c56;"></div>
<svg class="r" style="left:0px;top:0px;" width="96" height="91" viewBox="0 0 96 91">
    <path d="M23.9 44.5 A23.95 23.95 0 0 1 48.3 20.6" stroke="#4fae4e" stroke-width="10" fill="none" stroke-linecap="round"/>
    <path d="M66.7 29.75 A23.95 23.95 0 0 1 71.8 44.5" stroke="#df4e31" stroke-width="10" fill="none" stroke-linecap="round"/>
    <path d="M48.3 20.6 A23.95 23.95 0 0 1 66.7 29.75" stroke="#f4b531" stroke-width="10" fill="none" stroke-linecap="round"/>
    <path d="M43.2 43 L60.8 22.8 L51.2 48.3 A4.5 4.5 0 0 1 43.2 43 Z" fill="#f8f8f8"/>
    <g stroke-linecap="round" stroke-width="6.1">
    <line x1="22.8" y1="56.3" x2="22.8" y2="62" stroke="#c6d8fb"/>
    <line x1="31.9" y1="55.6" x2="31.9" y2="67" stroke="#669df4"/>
    <line x1="41.8" y1="55.6" x2="41.8" y2="75" stroke="#4285f4"/>
    <line x1="51.7" y1="55.6" x2="51.7" y2="67" stroke="#c6d8fb"/>
    <line x1="61.7" y1="55.6" x2="61.7" y2="70.8" stroke="#669df4"/>
    <line x1="72.6" y1="56.3" x2="72.6" y2="62" stroke="#4285f4"/>
    </g></svg>
<span class="t" style="left:93.5px;top:15.5px;font-size:54.86px;color:#e4e4e6;transform:scaleX(0.9786);">Perfetto</span>
<div class="r" style="left:418.8px;top:33.0px;width:40.1px;height:5.0px;background:#ffffff;"></div>
<div class="r" style="left:418.8px;top:44.0px;width:40.1px;height:5.0px;background:#ffffff;"></div>
<div class="r" style="left:418.8px;top:55.0px;width:40.1px;height:5.0px;background:#ffffff;"></div>
<span class="t" style="left:17.0px;top:95.1px;font-size:31.43px;color:#ffffff;transform:scaleX(0.8288);">iter_1_vs_trace.json (88 MB)</span>
<div class="r" style="left:21.9px;top:168.5px;width:33.3px;height:8.0px;background:#babcc0;"></div>
<div class="r" style="left:21.9px;top:179.6px;width:15.1px;height:3.9px;background:#babcc0;"></div>
<div class="r" style="left:40.1px;top:179.6px;width:15.1px;height:3.9px;background:#babcc0;"></div>
<div class="r" style="left:21.9px;top:187.2px;width:9.2px;height:3.7px;background:#babcc0;"></div>
<div class="r" style="left:34.0px;top:187.2px;width:9.0px;height:3.7px;background:#babcc0;"></div>
<div class="r" style="left:46.0px;top:187.2px;width:9.2px;height:3.7px;background:#babcc0;"></div>
<div class="r" style="left:21.9px;top:194.6px;width:4.0px;height:4.0px;background:#babcc0;"></div>
<div class="r" style="left:29.0px;top:194.6px;width:4.0px;height:4.0px;background:#babcc0;"></div>
<div class="r" style="left:36.5px;top:194.6px;width:4.0px;height:4.0px;background:#babcc0;"></div>
<div class="r" style="left:44.0px;top:194.6px;width:4.0px;height:4.0px;background:#babcc0;"></div>
<div class="r" style="left:51.2px;top:194.6px;width:4.0px;height:4.0px;background:#babcc0;"></div>
<span class="t" style="left:82.0px;top:164.5px;font-size:32.14px;color:#babcc0;transform:scaleX(0.9575);">Show timeline</span>
<span class="t" style="left:82.0px;top:234.5px;font-size:32.14px;color:#babcc0;transform:scaleX(0.9444);">Download</span>
<span class="t" style="left:82.0px;top:305.0px;font-size:32.14px;color:#babcc0;transform:scaleX(0.8947);">Query (SQL)</span>
<span class="t" style="left:82.0px;top:375.0px;font-size:32.14px;color:#babcc0;transform:scaleX(0.9303);">Viz</span>
<span class="t" style="left:82.0px;top:445.5px;font-size:32.14px;color:#babcc0;transform:scaleX(0.9752);">Metrics</span>
<span class="t" style="left:82.0px;top:515.5px;font-size:32.14px;color:#babcc0;transform:scaleX(0.9690);">Info and stats</span>
<span class="t" style="left:17.0px;top:660.1px;font-size:34.29px;color:#ffffff;transform:scaleX(0.9840);-webkit-text-stroke:0.55px #ffffff;">Convert trace</span>
<svg class="r" style="left:410px;top:662px;" width="32" height="24" viewBox="0 0 32 24"><path d="M4 19 L16 7 L28 19" stroke="#6d7077" stroke-width="4" fill="none"/></svg>
<span class="t" style="left:17.0px;top:1046.0px;font-size:34.29px;color:#ffffff;transform:scaleX(0.9662);-webkit-text-stroke:0.55px #ffffff;">Example Traces</span>
<svg class="r" style="left:410px;top:1048.5px;" width="32" height="24" viewBox="0 0 32 24"><path d="M4 19 L16 7 L28 19" stroke="#6d7077" stroke-width="4" fill="none"/></svg>
<span class="t" style="left:17.0px;top:1360.4px;font-size:34.29px;color:#ffffff;transform:scaleX(0.9909);-webkit-text-stroke:0.55px #ffffff;">Support</span>
<svg class="r" style="left:410px;top:1363px;" width="32" height="24" viewBox="0 0 32 24"><path d="M4 19 L16 7 L28 19" stroke="#6d7077" stroke-width="4" fill="none"/></svg>
<span class="t" style="left:82.0px;top:760.9px;font-size:32.14px;color:#babcc0;transform:scaleX(0.9403);">Switch to legacy UI</span>
<span class="t" style="left:82.0px;top:832.7px;font-size:32.14px;color:#babcc0;transform:scaleX(0.9489);">Convert to .json</span>
<span class="t" style="left:82.0px;top:902.5px;font-size:32.14px;color:#babcc0;transform:scaleX(0.9499);">Convert to .systrace</span>
<span class="t" style="left:82.0px;top:1148.1px;font-size:32.14px;color:#babcc0;transform:scaleX(0.9440);">Open Android example</span>
<span class="t" style="left:82.0px;top:1217.8px;font-size:32.14px;color:#babcc0;transform:scaleX(0.9329);">Open Chrome example</span>
<span class="t" style="left:82.0px;top:1462.9px;font-size:32.14px;color:#babcc0;transform:scaleX(0.9587);">Keyboard shortcuts</span>
<span class="t" style="left:82.0px;top:1533.2px;font-size:32.14px;color:#babcc0;transform:scaleX(0.9621);">Documentation</span>
<span class="t" style="left:82.0px;top:1603.0px;font-size:32.14px;color:#babcc0;transform:scaleX(0.9287);">Flags</span>
<span class="t" style="left:82.0px;top:1674.0px;font-size:32.14px;color:#babcc0;transform:scaleX(0.9309);">Report a bug</span>
<span class="t" style="left:82.0px;top:1744.5px;font-size:32.14px;color:#babcc0;transform:scaleX(0.9453);text-decoration:line-through;">Record metatrace</span>
<svg class="r" style="left:0px;top:0px;" width="496" height="1932" viewBox="0 0 496 1932"><path d="M38.65 239.2 V260.2 M30.4 251.7 L38.65 260.0 L46.9 251.7 M25.6 259.4 V267.5 H51.6 V259.4" stroke="#babcc0" stroke-width="3.4" fill="none"/><ellipse cx="38.5" cy="315.8" rx="16.6" ry="7.6" fill="#babcc0"/>
            <path d="M21.9 321.4 Q38.5 333.4 55.1 321.4 V327 Q38.5 337.8 21.9 327 Z" fill="#babcc0"/>
            <path d="M21.9 330.6 Q38.5 342.4 55.1 330.6 V336 Q38.5 347.4 21.9 336 Z" fill="#babcc0"/><path d="M21.85 385.73 L29.60 390.74 L38.72 378.43 L47.38 385.73 L55.14 385.73 L55.14 409.71 L21.85 409.71 Z M25.96 393.48 L30.52 396.21 L39.18 383.90 L46.02 389.83 L51.03 389.83 L51.03 403.51 L38.72 393.93 L30.97 403.51 L25.96 399.40 Z" fill="#babcc0" fill-rule="evenodd"/><path d="M25.5 478.75 A16.5 16.5 0 0 1 48.5 454.9 M51.6 458.8 A16.5 16.5 0 0 1 51.7 478.75 Z" stroke="#babcc0" stroke-width="3.7" fill="none" stroke-linejoin="round"/>
            <path d="M24 478.75 H53.2" stroke="#babcc0" stroke-width="3.7" stroke-linecap="round"/>
            <path d="M35.6 467.6 L51 456.9 L41 472.6 A3.6 3.6 0 0 1 35.6 467.6 Z" fill="#babcc0"/><circle cx="38.6" cy="535.5" r="16.45" stroke="#babcc0" stroke-width="3.7" fill="none"/>
            <circle cx="38.6" cy="528.6" r="2.1" fill="#babcc0"/><rect x="36.8" y="534" width="3.6" height="11.3" fill="#babcc0"/><path d="M29.15 764.65 H55.15 V790.15 H29.15 Z M21.95 770 V797.35 H49.7" stroke="#babcc0" stroke-width="3.8" fill="none"/><path d="M38.65 837.4000000000001 V858.4000000000001 M30.4 849.9000000000001 L38.65 858.2 L46.9 849.9000000000001 M25.6 857.6000000000001 V865.7 H51.6 V857.6000000000001" stroke="#babcc0" stroke-width="3.4" fill="none"/><path d="M38.65 907.2 V928.2 M30.4 919.7 L38.65 928.0 L46.9 919.7 M25.6 927.4000000000001 V935.5 H51.6 V927.4000000000001" stroke="#babcc0" stroke-width="3.4" fill="none"/><path d="M25.65 1150.45 H42.6 L51.25 1159.3 V1183.35 H25.65 Z" stroke="#babcc0" stroke-width="3.5" fill="none"/>
            <path d="M40.1 1148.7 H43.5 L53 1158.0 V1161.4 H40.1 Z" fill="#babcc0"/>
            <rect x="31" y="1167.2" width="15" height="4" fill="#babcc0"/><rect x="31" y="1174.2" width="15" height="4" fill="#babcc0"/><path d="M25.65 1220.15 H42.6 L51.25 1229.0 V1253.05 H25.65 Z" stroke="#babcc0" stroke-width="3.5" fill="none"/>
            <path d="M40.1 1218.4 H43.5 L53 1227.7 V1231.1000000000001 H40.1 Z" fill="#babcc0"/>
            <rect x="31" y="1236.9" width="15" height="4" fill="#babcc0"/><rect x="31" y="1243.9" width="15" height="4" fill="#babcc0"/><circle cx="38.6" cy="1481.9" r="16.45" stroke="#babcc0" stroke-width="3.7" fill="none"/>
            <path d="M33.3 1477 A5.5 5.5 0 1 1 41.8 1481.2 Q38.6 1483.2 38.6 1486.6" stroke="#babcc0" stroke-width="3.4" fill="none"/>
            <circle cx="38.6" cy="1490.6" r="2.2" fill="#babcc0"/><path d="M25.65 1536.55 H43 L51.25 1546.3 V1569.55 H25.65 Z" stroke="#babcc0" stroke-width="3.5" fill="none"/>
            <circle cx="38.6" cy="1554.4" r="5.7" stroke="#babcc0" stroke-width="3.4" fill="none"/>
            <path d="M42.5 1558.3 L52.5 1568.6" stroke="#babcc0" stroke-width="3.4"/><g transform="translate(16.2 1600.8) scale(1.853)"><path d="M14 6l-1-2H5v17h2v-7h5l1 2h7V6h-6zm4 8h-4l-1-2H7V6h5l1 2h5v6z" fill="#babcc0"/></g><g transform="translate(16.6 1671.1) scale(1.82)"><path d="M20 8h-2.81c-.45-.78-1.07-1.45-1.82-1.96L17 4.41 15.59 3l-2.17 2.17C12.96 5.06 12.49 5 12 5s-.96.06-1.41.17L8.41 3 7 4.41l1.62 1.63C7.88 6.55 7.260 7.22 6.81 8H4v2h2.09c-.05.33-.09.66-.09 1v1H4v2h2v1c0 .34.04.67.09 1H4v2h2.81c1.04 1.79 2.97 3 5.19 3s4.15-1.21 5.19-3H20v-2h-2.09c.05-.33.09-.66.09-1v-1h2v-2h-2v-1c0-.34-.04-.67-.09-1H20V8zm-4 4v3c0 .22-.02.44-.05.65l-.1.65-.37.65c-.72 1.24-2.04 2.05-3.480 2.05s-2.76-.81-3.48-2.05l-.37-.65-.1-.65C8.02 15.44 8 15.22 8 15v-4c0-.23.02-.46.05-.68l.1-.65.37-.65c.3-.52.72-.97 1.21-1.31l.57-.39.74-.18c.31-.08.64-.14.96-.14s.65.06.97.13l.74.18.57.39c.5.34.91.78 1.21 1.31l.38.65.1.65c.03.22.05.45.05.69v1zm-6 2h4v2h-4zm0-4h4v2h-4z" fill="#babcc0"/></g><circle cx="32.9" cy="1763.8" r="11" stroke="#babcc0" stroke-width="4" fill="none"/>
            <path d="M46 1751.5 A12.55 12.55 0 0 1 46 1776.4 V1771.6 A7.8 7.8 0 0 0 46 1756.3 Z" fill="#babcc0"/></svg>
<div class="r" style="left:0.0px;top:1842.0px;width:479.0px;height:90.0px;background:#262b37;"></div>
<div class="r" style="left:12.0px;top:1870.0px;width:53.0px;height:52.5px;background:#12151b;border-radius:5px;"></div>
<span class="t" style="left:17.0px;top:1875.5px;font-size:19.29px;color:#5a86d6;transform:scaleX(0.9123);">WSM</span>
<span class="t" style="left:33.5px;top:1898.5px;font-size:19.29px;color:#5a86d6;transform:scaleX(0.9323);">0</span>
<div class="r" style="left:87.0px;top:1870.0px;width:53.0px;height:52.5px;background:#88c878;border-radius:5px;"></div>
<span class="t" style="left:99.5px;top:1875.5px;font-size:19.29px;color:#111;transform:scaleX(0.9013);">SW</span>
<span class="t" style="left:100.5px;top:1898.5px;font-size:19.29px;color:#111;transform:scaleX(0.8988);">ON</span>
<span class="t" style="left:291.0px;top:1896.3px;font-size:23.71px;color:#8a8d94;transform:scaleX(0.9918);">v45.0-f256f01ae</span>
<div class="r" style="left:479.0px;top:492.0px;width:17.0px;height:1438.0px;background:#5c6068;border-radius:0 0 6px 6px;"></div>
</body></html>
